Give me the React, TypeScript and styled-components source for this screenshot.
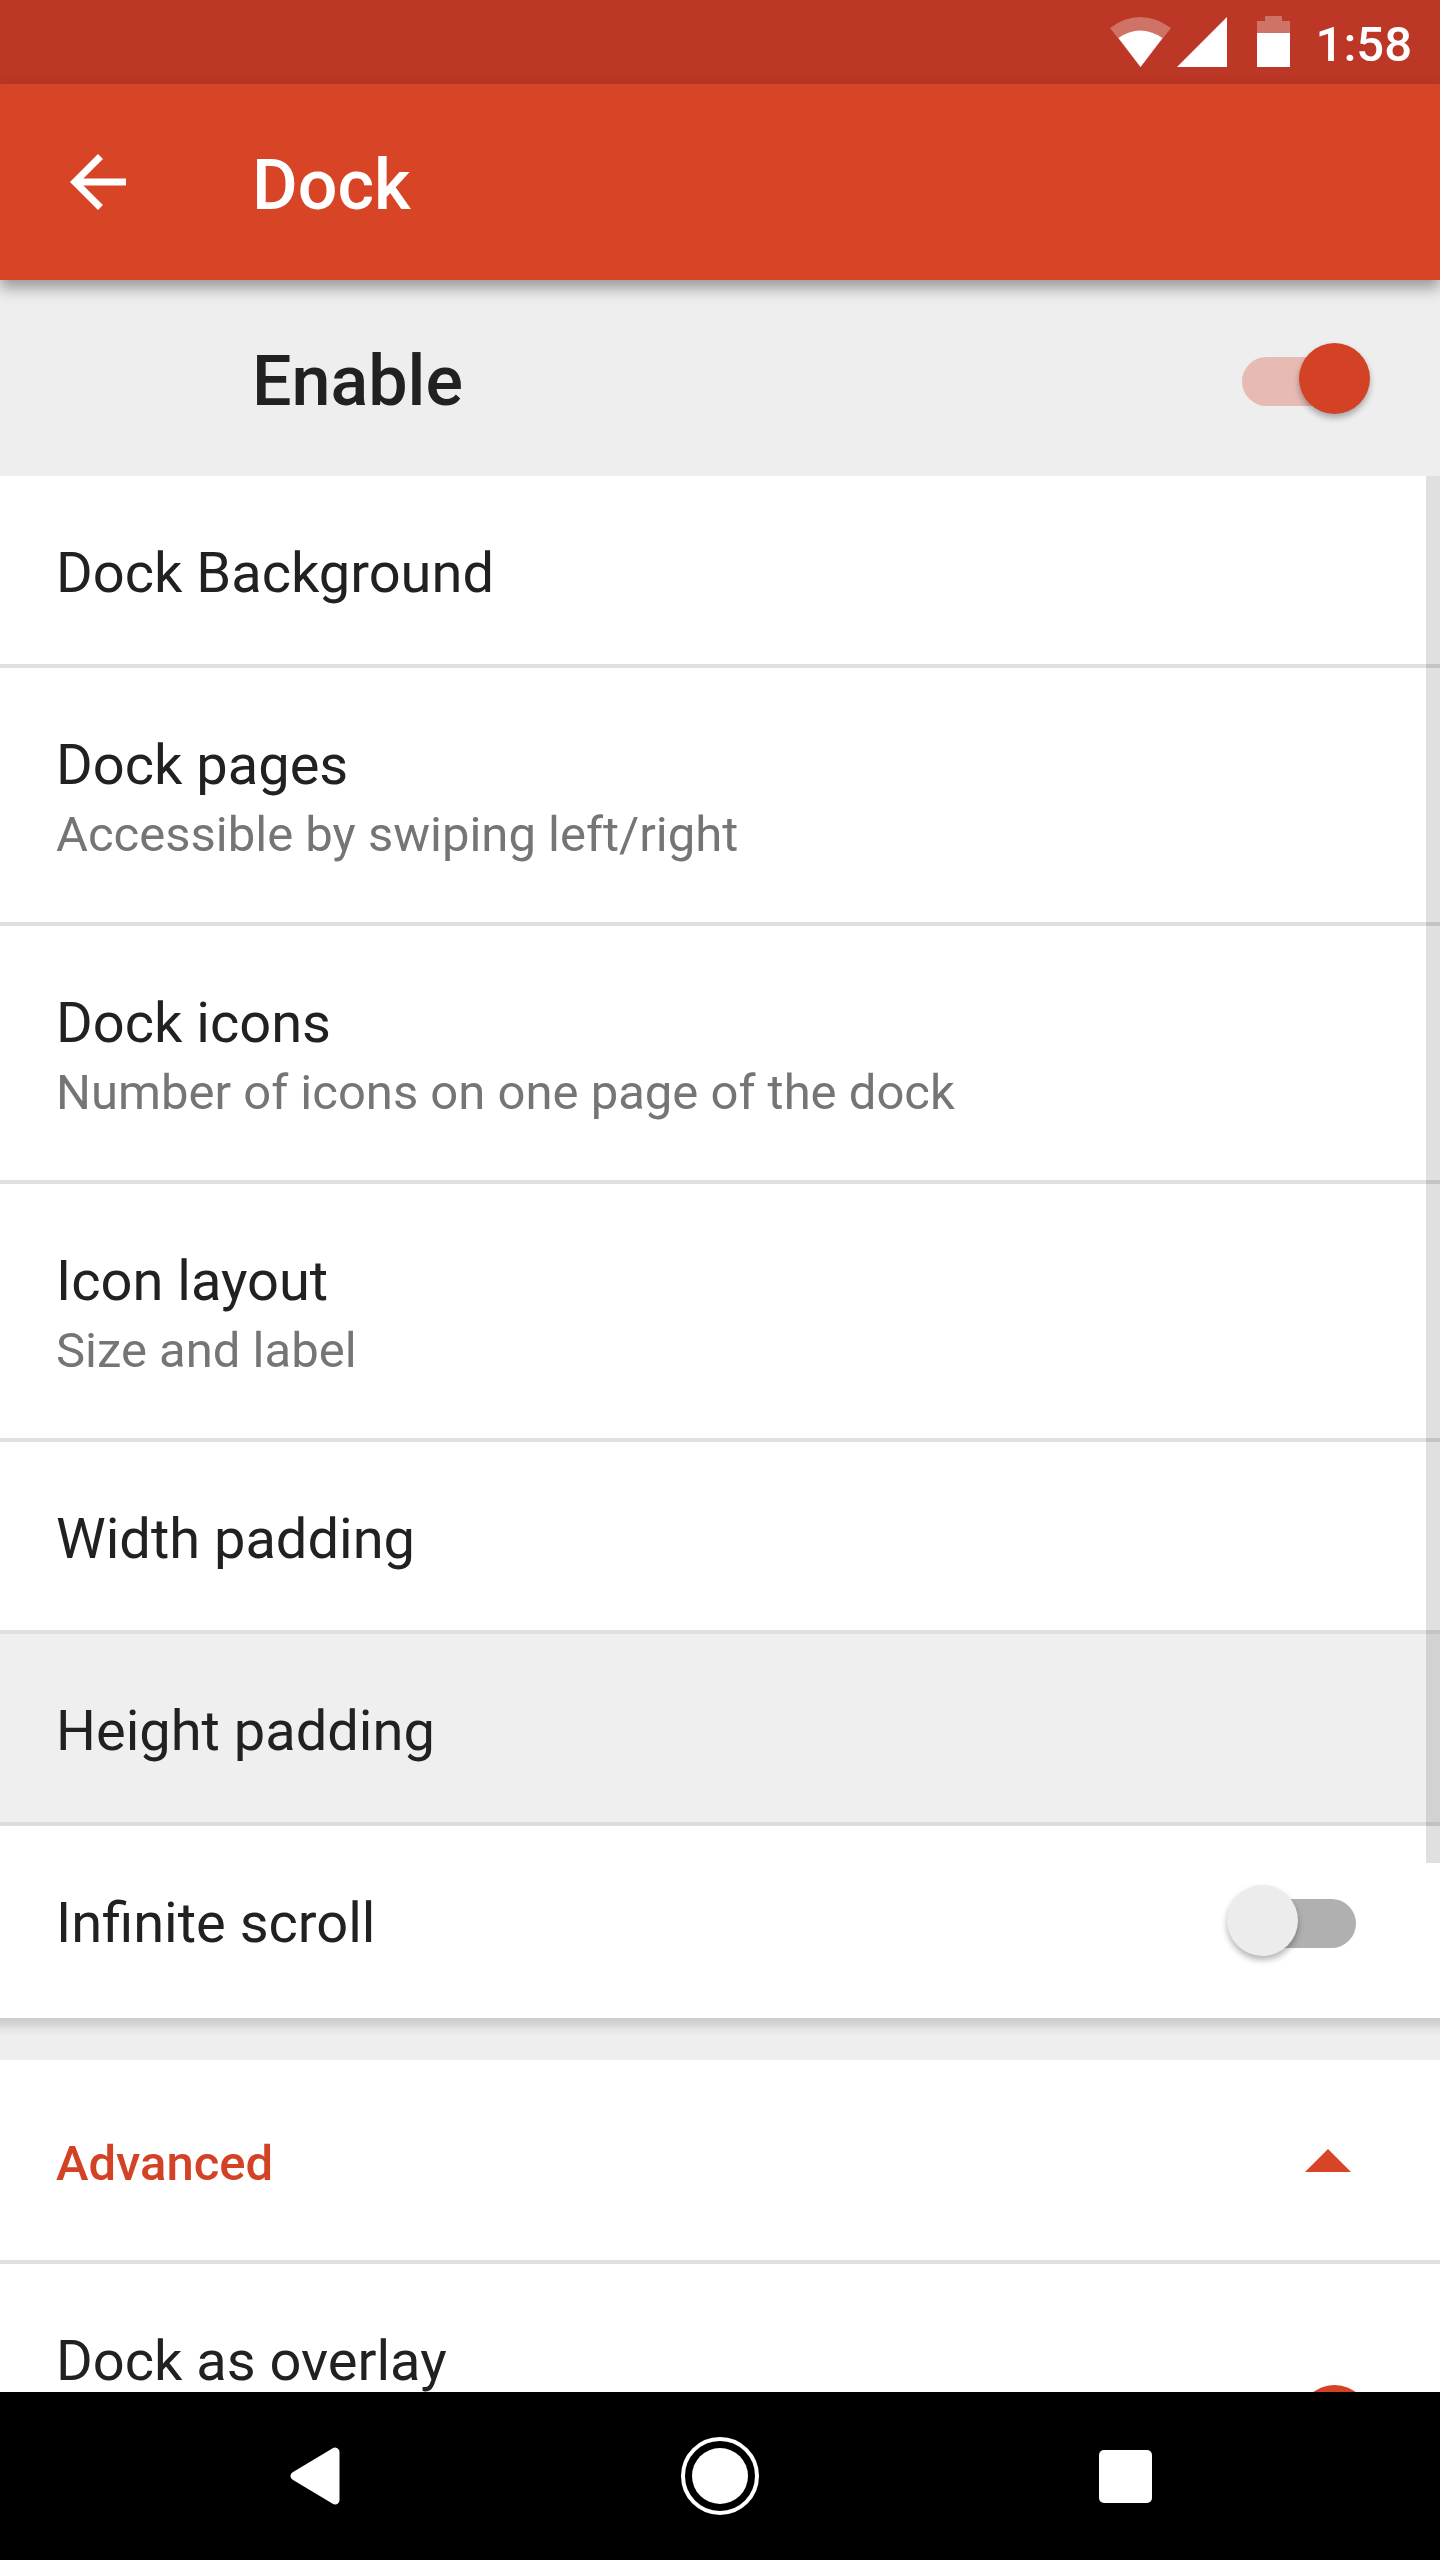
import React, { useState } from "react";
import styled, { createGlobalStyle } from "styled-components";

const colors = {
  primary: "#d74526",
  primaryDark: "#bc3726",
  accent: "#d34224",
  surface: "#ffffff",
  muted: "#eeeeee",
  divider: "#e0e0e0",
  text: "#212121",
  secondary: "#757575",
};

const GlobalStyle = createGlobalStyle`
  *, *::before, *::after { box-sizing: border-box; }
  body { margin: 0; background: ${colors.surface}; }
  button { border: 0; margin: 0; background: none; font: inherit; color: inherit; cursor: pointer; }
`;

const Screen = styled.div`
  display: flex;
  flex-direction: column;
  height: 100vh;
  font-family: Roboto, "Noto Sans", sans-serif;
  color: ${colors.text};
  background: ${colors.surface};
`;

const StatusBar = styled.div`
  flex: none;
  display: flex;
  align-items: center;
  justify-content: flex-end;
  height: 84px;
  padding-right: 28px;
  background: ${colors.primaryDark};
  color: #fff;
`;

const StatusIcons = styled.svg`
  flex: none;
  margin-right: 24px;
`;

const Clock = styled.time`
  padding-top: 6px;
  font-size: 49px;
  line-height: 58px;
  font-weight: 500;
`;

const Toolbar = styled.header`
  position: relative;
  z-index: 1;
  flex: none;
  display: flex;
  align-items: center;
  height: 196px;
  padding: 0 56px;
  gap: 112px;
  background: ${colors.primary};
  color: #fff;
  box-shadow: 0 8px 14px rgba(0, 0, 0, 0.36);
`;

const BackButton = styled.button`
  flex: none;
  display: flex;
  padding: 0;
`;

const Title = styled.h1`
  margin: 0;
  padding-top: 6px;
  font-size: 70px;
  line-height: 82px;
  font-weight: 500;
`;

const EnableBar = styled.label`
  flex: none;
  display: flex;
  align-items: center;
  justify-content: space-between;
  height: 196px;
  padding: 0 70px 0 252px;
  background: ${colors.muted};
`;

const EnableText = styled.span`
  padding-top: 6px;
  font-size: 70px;
  line-height: 82px;
  font-weight: 500;
`;

const ListFrame = styled.main`
  position: relative;
  flex: 1;
  min-height: 0;
`;

const ListScroll = styled.div`
  height: 100%;
  overflow-y: auto;
  scrollbar-width: none;
`;

const ScrollThumb = styled.div`
  position: absolute;
  top: 0;
  right: 0;
  width: 14px;
  height: 72.4%;
  background: rgba(0, 0, 0, 0.12);
  pointer-events: none;
`;

const Row = styled.div<{ $pressed?: boolean; $tall?: boolean }>`
  display: flex;
  justify-content: space-between;
  align-items: flex-start;
  width: 100%;
  min-height: ${(p) => (p.$tall ? 316 : 192)}px;
  padding: 58px 70px 58px 56px;
  border-bottom: 4px solid ${(p) => (p.$pressed ? "#dcdcdc" : colors.divider)};
  background: ${(p) => (p.$pressed ? "#efefef" : colors.surface)};
  text-align: left;

  button& {
    border-style: none none solid;
  }

  &:last-child {
    border-bottom-color: transparent;
  }
`;

const RowText = styled.span`
  display: flex;
  flex-direction: column;
  gap: 8px;
  padding-top: 6px;
`;

const RowTitle = styled.span`
  font-size: 56px;
  line-height: 66px;
`;

const RowSummary = styled.span`
  font-size: 49px;
  line-height: 58px;
  color: ${colors.secondary};
`;

const SwitchInput = styled.input`
  appearance: none;
  position: relative;
  flex: none;
  align-self: center;
  width: 143px;
  height: 71px;
  margin: 0;
  cursor: pointer;

  &::before {
    content: "";
    position: absolute;
    inset: 14px 14px 8px 15px;
    border-radius: 25px;
    background: #b0b0b0;
  }

  &::after {
    content: "";
    position: absolute;
    top: 0;
    left: 0;
    width: 71px;
    height: 71px;
    border-radius: 50%;
    background: #ececec;
    box-shadow: 0 4px 6px rgba(0, 0, 0, 0.3);
  }

  &:checked::before {
    background: #e8bab4;
  }

  &:checked::after {
    left: 72px;
    background: ${colors.accent};
  }
`;

const SectionGap = styled.div`
  height: 42px;
  background: linear-gradient(#cecece 0, #d0d0d0 4px, #e4e4e4 11px, ${colors.muted} 18px);
`;

const SectionHeader = styled.button`
  display: flex;
  align-items: center;
  justify-content: space-between;
  width: 100%;
  height: 204px;
  padding: 0 89px 0 56px;
  color: ${colors.accent};
  background: ${colors.surface};

  && {
    border-bottom: 4px solid ${colors.divider};
  }
`;

const SectionTitle = styled.span`
  padding-top: 8px;
  font-size: 49px;
  line-height: 58px;
  font-weight: 500;
`;

const NavBar = styled.nav`
  flex: none;
  display: flex;
  height: 168px;
  padding: 0 7.8%;
  background: #000;
`;

const NavButton = styled.button`
  flex: 1;
  display: flex;
  align-items: center;
  justify-content: center;
  padding: 0;
`;

type Item = { title: string; summary?: string; pressed?: boolean };

const items: Item[] = [
  { title: "Dock Background" },
  { title: "Dock pages", summary: "Accessible by swiping left/right" },
  { title: "Dock icons", summary: "Number of icons on one page of the dock" },
  { title: "Icon layout", summary: "Size and label" },
  { title: "Width padding" },
  { title: "Height padding", pressed: true },
];

function Switch({ initial, id }: { initial: boolean; id: string }) {
  const [on, setOn] = useState(initial);
  return (
    <SwitchInput id={id} type="checkbox" role="switch" checked={on} onChange={() => setOn(!on)} />
  );
}

export default function App() {
  const [open, setOpen] = useState(true);

  return (
    <Screen>
      <GlobalStyle />
      <StatusBar>
        <StatusIcons width="184" height="52" viewBox="0 0 184 52" aria-hidden="true">
          <path d="M2 12Q32 -10 63 12L32.500 51Z" fill="#fff" fillOpacity="0.3" />
          <path d="M10.500 22Q32 7 54.500 22L32.500 51Z" fill="#fff" />
          <path d="M69 51L119 1V51Z" fill="#fff" />
          <path d="M157 0H174V5H182V17H149V5H157Z" fill="#fff" fillOpacity="0.3" />
          <path d="M149 17H182V51H149Z" fill="#fff" />
        </StatusIcons>
        <Clock>1:58</Clock>
      </StatusBar>

      <Toolbar>
        <BackButton aria-label="Back">
          <svg width="84" height="84" viewBox="0 0 24 24" fill="currentColor">
            <path d="M20 11H7.830l5.590-5.590L12 4l-8 8 8 8 1.410-1.410L7.830 13H20v-2z" />
          </svg>
        </BackButton>
        <Title>Dock</Title>
      </Toolbar>

      <EnableBar htmlFor="enable">
        <EnableText>Enable</EnableText>
        <Switch id="enable" initial={true} />
      </EnableBar>

      <ListFrame>
        <ListScroll>
          <section>
            {items.map((item) => (
              <Row as="button" key={item.title} $pressed={item.pressed}>
                <RowText>
                  <RowTitle>{item.title}</RowTitle>
                  {item.summary && <RowSummary>{item.summary}</RowSummary>}
                </RowText>
              </Row>
            ))}
            <Row as="label" htmlFor="infinite">
              <RowText>
                <RowTitle>Infinite scroll</RowTitle>
              </RowText>
              <Switch id="infinite" initial={false} />
            </Row>
          </section>
          <SectionGap />
          <section>
            <SectionHeader aria-expanded={open} onClick={() => setOpen(!open)}>
              <SectionTitle>Advanced</SectionTitle>
              <svg width="46" height="23" viewBox="0 0 46 23" fill={colors.primary} aria-hidden="true">
                <path d={open ? "M0 23L23 0L46 23Z" : "M0 0L23 23L46 0Z"} />
              </svg>
            </SectionHeader>
            {open && (
              <Row as="label" htmlFor="overlay" $tall>
                <RowText>
                  <RowTitle>Dock as overlay</RowTitle>
                </RowText>
                <Switch id="overlay" initial={true} />
              </Row>
            )}
          </section>
        </ListScroll>
        <ScrollThumb />
      </ListFrame>

      <NavBar>
        <NavButton aria-label="Back">
          <svg width="50" height="58" viewBox="0 0 50 58">
            <path d="M5 29L45 5V53Z" fill="#fff" stroke="#fff" strokeWidth="9" strokeLinejoin="round" />
          </svg>
        </NavButton>
        <NavButton aria-label="Home">
          <svg width="78" height="78" viewBox="0 0 78 78">
            <circle cx="39" cy="39" r="37" fill="none" stroke="#fff" strokeWidth="4" />
            <circle cx="39" cy="39" r="28" fill="#fff" />
          </svg>
        </NavButton>
        <NavButton aria-label="Recent apps">
          <svg width="53" height="53" viewBox="0 0 53 53">
            <rect width="53" height="53" rx="5" fill="#fff" />
          </svg>
        </NavButton>
      </NavBar>
    </Screen>
  );
}
